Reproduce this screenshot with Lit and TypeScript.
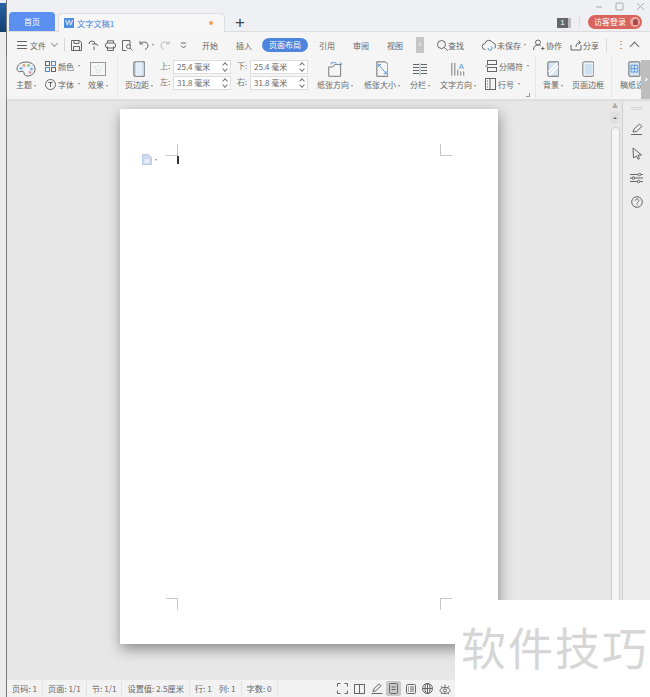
import { LitElement, html, css, svg } from "lit";
import { customElement } from "lit/decorators.js";

const ic = (w: number, h: number, body: unknown, s = 1) =>
  html`<svg class="ic" width=${w * s} height=${h * s} viewBox="0 0 ${w} ${h}" fill="none" stroke="currentColor" stroke-width="1">${body}</svg>`;

const icons: Record<string, () => unknown> = {
  palette: () => ic(20, 16, svg`<path d="M10 1C4.500 1 1 4 1 8c0 2.500 2 3 4 2.500 2-.5 3 0 3 1.500s1 3 3 3c4.500 0 8-2.500 8-7S15 1 10 1z" fill="#eef2f7"/><circle cx="5" cy="7.500" r="1.400" fill="#7ab2e0" stroke="none"/><circle cx="8" cy="4.500" r="1.400" fill="#e8a06a" stroke="none"/><circle cx="12.500" cy="4.500" r="1.400" fill="#90c48a" stroke="none"/><circle cx="15.500" cy="8" r="1.400" fill="#7ab2e0" stroke="none"/><circle cx="14" cy="11.500" r="1.400" fill="#e0a0b0" stroke="none"/>`),
  colors: () => ic(11, 11, svg`<rect x=".5" y=".5" width="4" height="4"/><rect x="6.500" y=".5" width="4" height="4" stroke="#4a90d9"/><rect x=".5" y="6.500" width="4" height="4" stroke="#4a90d9"/><rect x="6.500" y="6.500" width="4" height="4"/>`),
  font: () => ic(11, 11, svg`<circle cx="5.500" cy="5.500" r="5"/><path d="M3.300 3.500h4.400M5.500 3.500v4.500" />`),
  effect: () => ic(16, 14, svg`<rect x=".5" y=".5" width="15" height="13" stroke="#999"/><path d="M5 5h.8M8 4h.8M10.500 6h.8M6 8h.8M9 8.500h.8M7.500 10.500h.8" stroke="#9bb"/>`),
  margin: () => ic(15, 19, svg`<rect x="1" y="1" width="13" height="17" rx="1" fill="#c8d8ea" stroke="#555"/><rect x="3.500" y="1.500" width="7.500" height="16" fill="#e4edf6" stroke="none"/>`, 0.85),
  orient: () => ic(20, 19, svg`<path d="M2 7h5l2-3h7v14H2z"/><path d="M5 4V2h6M15 1.500l2.500 2-2.500 2" stroke="#4a90d9"/>`, 0.85),
  size: () => ic(15, 19, svg`<path d="M1 1h10l3 3v14H1z" stroke="#555"/><path d="M3 4l9 11M3 4v3M3 4h3M12 15v-3M12 15H9" stroke="#4a90d9"/>`, 0.85),
  cols: () => ic(16, 13, svg`<path d="M1 1.500h6M1 4.500h6M1 7.500h6M1 10.500h6M9 1.500h6M9 4.500h6M9 7.500h6M9 10.500h6" stroke="#666"/><path d="M8 0v13" stroke="#9bb"/>`),
  dir: () => ic(17, 17, svg`<path d="M1 1v15M4.500 1v15M8 9v7M11.500 11v5M15 11v5" stroke="#666"/><text x="9" y="8" font-size="9" fill="#4a90d9" stroke="none" font-family="Liberation Sans">A</text>`, 0.85),
  brk: () => ic(12, 12, svg`<rect x="2.500" y=".5" width="9" height="4"/><rect x="2.500" y="7.500" width="9" height="4"/><path d="M0 6h3" stroke="#4a90d9"/>`),
  line: () => ic(11, 12, svg`<rect x=".5" y=".5" width="10" height="11"/><path d="M5 .5v11M2 3h1M2 6h1M2 9h1"/>`),
  bg: () => ic(15, 19, svg`<rect x="1" y="1" width="13" height="17" rx="1" fill="#d6e4f2" stroke="#555"/><path d="M2 13L12 2M3 17L13 6" stroke="#fff" stroke-width="2"/>`, 0.85),
  border: () => ic(15, 19, svg`<rect x="1" y="1" width="13" height="17" rx="2" stroke="#555" fill="#fff"/><rect x="3" y="3" width="9.500" height="13" fill="#cfe0f0" stroke="none"/>`, 0.85),
  grid: () => ic(15, 19, svg`<rect x="1" y="1" width="13" height="17" rx="1" fill="#d6e4f2" stroke="#555"/><path d="M3.500 5h8v8h-8zM7.500 5v8M3.500 9h8" stroke="#4a90d9"/>`, 0.85),
  save: () => ic(11, 11, svg`<path d="M.5.500h8l2 2v8h-10zM3 .5v3h5v-3M2.500 10V6.500h6V10"/>`),
  undoP: () => ic(11, 11, svg`<path d="M1 4a3 3 0 0 1 6 0H4M6 10V6.500M7 4a2.500 2.500 0 0 1 3 2"/>`),
  print: () => ic(11, 11, svg`<rect x=".5" y="3" width="10" height="5" rx="2"/><path d="M2.500 3V.8h6V3M2.500 6.500v4h6v-4"/>`),
  preview: () => ic(11, 11, svg`<path d="M8 6V.5H.5v10h4"/><circle cx="6.500" cy="6.500" r="2"/><path d="M8 8l2.500 2.500"/>`),
  undo: () => ic(10, 10, svg`<path d="M1 1v3h3M1 4c2-3 8-2.500 8 1.500 0 2-1.500 3.500-3 4"/>`),
  redo: () => ic(10, 10, svg`<path d="M9 1v3H6M9 4C7 1 1 1.500 1 5.500c0 2 1.500 3.500 3 4" stroke="#bbb"/>`),
  custom: () => ic(7, 7, svg`<path d="M1 1h5M1 3.500l2.500 2.500L6 3.500"/>`),
  search: () => ic(11, 11, svg`<circle cx="4.500" cy="4.500" r="4"/><path d="M7.500 7.500l3.300 3.300"/>`),
  cloud: () => ic(14, 12, svg`<path d="M3.500 10.500a3 3 0 0 1-.5-6 4 4 0 0 1 7.500-1 3.500 3.500 0 0 1 2 6"/><path d="M6 9a2 2 0 1 0 3-1.500" stroke="#4a90d9"/>`),
  collab: () => ic(12, 12, svg`<circle cx="5" cy="3.500" r="2.500"/><path d="M.5 11c0-3.500 2-5 4.500-5 1 0 2 .3 2.500.8M8 9.500h3.500M9.800 7.800v3.400"/>`),
  share: () => ic(12, 12, svg`<path d="M1 6v5h10V6M6 8c0-3 1.500-4.500 4-4.500M8.500 1.500l2 2-2 2"/>`),
  pen: () => ic(13, 12, svg`<path d="M1 11.500h11M3 9l1-3 5.500-5 2.500 2.500L6.500 8.500z"/>`),
  arrow: () => ic(12, 13, svg`<path d="M2 1l8.500 7H7l1.500 3.500-1.500.8L5.500 9 2.500 11z"/>`),
  sliders: () => ic(13, 12, svg`<path d="M0 2.500h8M11 2.500h2M0 6h2M5 6h8M0 9.500h7M10 9.500h3"/><circle cx="9.500" cy="2.500" r="1.300"/><circle cx="3.500" cy="6" r="1.300"/><circle cx="8.500" cy="9.500" r="1.300"/>`),
  help: () => ic(12, 12, svg`<circle cx="6" cy="6" r="5.300"/><path d="M4.300 4.700c0-2.300 3.500-2.300 3.500-.1 0 1.400-1.800 1.400-1.800 3M6 8.500v1"/>`),
  full: () => ic(11, 11, svg`<path d="M.5 3.500v-3h3M7.500.5h3v3M10.500 7.500v3h-3M3.500 10.500h-3v-3"/>`),
  book: () => ic(11, 10, svg`<rect x=".5" y=".5" width="10" height="9"/><path d="M5.500.5v9"/>`),
  edit: () => ic(12, 11, svg`<path d="M.5 10.500h11M2 8.500l.8-2.500L8 .8l2 2L4.500 8z"/>`),
  pageV: () => ic(9, 11, svg`<rect x=".5" y=".5" width="8" height="10" rx="1"/><path d="M2.500 4h4M2.500 6.500h4"/>`),
  outline: () => ic(10, 10, svg`<rect x=".5" y=".5" width="9" height="9" rx="1"/><path d="M2 3h1M4 3h4M2 5h1M4 5h4M2 7h1M4 7h4"/>`),
  web: () => ic(11, 11, svg`<circle cx="5.500" cy="5.500" r="5"/><path d="M.5 5.500h10M5.500.5v10"/><ellipse cx="5.500" cy="5.500" rx="2.500" ry="5"/>`),
  eye: () => ic(12, 12, svg`<ellipse cx="6" cy="7.500" rx="5" ry="3"/><circle cx="6" cy="7.500" r="1.500"/><path d="M2 3l1.500 2M6 1.500v3M10 3L8.500 5M2 11l1-1M10 11l-1-1"/>`),
  doc: () => ic(10, 11, svg`<path d="M.5.500h6l3 3v7h-9z" fill="#cfdcf0" stroke="#b8c9e6"/><path d="M2.500 6h5M2.500 8h5" stroke="#fff"/>`),
};

type Col = { w: number; icon: string; label: string; caret?: boolean; cls?: string };

@customElement("app-root")
export class AppRoot extends LitElement {
  static styles = css`
    :host { display: block; width: 650px; height: 697px; position: relative; overflow: hidden;
      font-family: "Noto Sans CJK SC", "Liberation Sans", sans-serif; font-size: 8px; color: #666; background: #e7e7e7; }
    * { box-sizing: border-box; }
    .ic { display: block; flex: none; color: #666; }
    .shell { display: flex; height: 697px; }
    .edge { width: 7px; flex: none; display: flex; flex-direction: column; background: #ececec; border-right: 1px solid #777; }
    .edge-top { height: 3px; background: #e9ecf1; }
    .edge-blue { height: 29px; background: linear-gradient(#2563a8, #143f70); }
    .app { flex: 1; display: flex; flex-direction: column; min-width: 0; }
    .cr { display: inline-block; flex: none; width: 0; height: 0; margin-left: 2px; vertical-align: middle; border-left: 1.500px solid transparent; border-right: 1.500px solid transparent; border-top: 2px solid #888; }

    .title { height: 32px; flex: none; background: #eef0f4; display: flex; align-items: flex-end; padding-left: 2px; position: relative; border-bottom: 1px solid #dcdcdc; }
    .tab-home { width: 46px; height: 19px; background: #5b8ff0; color: #fff; border-radius: 4px 4px 0 0; display: flex; align-items: center; justify-content: center; }
    .tab-doc { width: 167px; height: 19px; margin-left: 3px; margin-bottom: -1px; background: #f6f6f6; border: 1px solid #dcdcdc; border-bottom: none; border-radius: 4px 4px 0 0; display: flex; align-items: center; padding: 0 5px; color: #4a84d8; gap: 3px; font-size: 8.200px; }
    .w { width: 10px; height: 10px; background: #4d8fdd; color: #fff; font: 8px/10px "Liberation Sans", sans-serif; text-align: center; }
    .dot { width: 4px; height: 4px; border-radius: 50%; background: #f0a050; margin-left: auto; margin-right: 6px; }
    .plus { font: 17px/17px "Liberation Sans", sans-serif; color: #444; width: 30px; text-align: center; align-self: center; margin-top: 13px; }
    .winctl { position: absolute; right: 5px; top: 0; display: flex; gap: 12px; align-items: center; height: 12px; }
    .winctl .ic { color: #aaa; }
    .right-t { margin-left: auto; margin-right: 8px; display: flex; align-items: center; gap: 8px; align-self: center; margin-top: 12px; }
    .num { width: 14px; height: 10px; background: #666; border-right: 3px solid #bbb; color: #fff; font: 8px/10px "Liberation Sans", sans-serif; text-align: center; margin-top: 2px; }
    .vbar { width: 1px; height: 12px; background: #ddd; }
    .login { width: 54px; height: 14px; background: #d9645c; color: #fff; border-radius: 7px; display: flex; align-items: center; padding-left: 6px; position: relative; white-space: nowrap; }
    .avatar { position: absolute; right: 2px; top: 2px; width: 10px; height: 10px; border-radius: 50%; background: #ecaaa5; display: flex; justify-content: center; }
    .avatar i { display: block; width: 5px; height: 6px; margin-top: 2px; border-radius: 3px 3px 1px 1px; background: #a84a45; }

    .tools { height: 23px; flex: none; background: #f5f5f5; display: flex; align-items: center; padding: 3px 0 0 10px; position: relative; white-space: nowrap; }
    .ham { width: 10px; height: 8px; border-top: 1px solid #666; border-bottom: 1px solid #666; position: relative; margin-right: 3px; }
    .ham::after { content: ""; position: absolute; left: 0; right: 0; top: 2.500px; height: 1px; background: #666; }
    .sep { width: 1px; height: 14px; background: #d8d8d8; flex: none; }
    .sep-end { margin-left: 7px; }
    .chev { width: 5px; height: 5px; border-right: 1px solid #999; border-bottom: 1px solid #999; transform: rotate(45deg); margin: -3px 7px 0 6px; flex: none; }
    .qa { display: flex; align-items: center; gap: 6px; margin-left: 6px; }
    .push { display: flex; margin-left: 4px; }
    .menu { display: flex; margin-left: 6px; align-items: center; }
    .menu span { width: 34px; text-align: center; }
    .menu .on { width: 46px; height: 14px; line-height: 14px; background: #4d85dc; color: #fff; border-radius: 7px; margin: 0 2px 0 1px; }
    .more { width: 8px; height: 16px; background: #c6c6c6; color: #fff; font: 8px/16px "Liberation Sans", sans-serif; text-align: center; margin-left: 4px; }
    .find { display: flex; align-items: center; margin-left: 13px; }
    .act { display: flex; align-items: center; gap: 1px; }
    .a-save { margin-left: 18px; }
    .a-col { margin-left: 7px; }
    .a-share { margin-left: 8px; }
    .dots { color: #666; font: 10px/10px "Liberation Sans", sans-serif; width: 3px; margin-left: 9px; }
    .up { width: 7px; height: 7px; border-left: 1px solid #666; border-top: 1px solid #666; transform: rotate(45deg); margin: 3px 0 0 12px; }

    .ribbon { height: 45px; flex: none; background: #f5f5f5; display: flex; position: relative; border-bottom: 1px solid #e0e0e0; box-shadow: 0 1px 1px #ddd; white-space: nowrap; z-index: 1; overflow: hidden; }
    .col { flex: none; display: flex; flex-direction: column; align-items: center; padding-top: 4px; }
    .col .box { height: 20px; display: flex; align-items: center; }
    .col .lb { margin-top: -1px; height: 14px; line-height: 14px; }
    .col.clip { align-items: flex-end; padding-left: 4px; overflow: hidden; }
    .col.clip .lb { width: 21px; overflow: hidden; }
    .rows { flex: none; display: flex; flex-direction: column; padding-top: 4px; gap: 4px; }
    .r-theme { width: 39px; }
    .r-break { width: 47px; padding-left: 1px; }
    .rw { display: flex; align-items: center; gap: 2px; height: 14px; }
    .rsep { flex: none; width: 1px; height: 42px; margin: 1px 3px 0 5px; background: #e6e6e6; }
    .rsep.s2 { margin: 1px 4px 0 4px; }
    .rsep.s3 { margin: 1px 4px 0 1px; }
    .sp3 { flex: none; width: 3px; }
    .spin { flex: none; display: grid; grid-template-columns: 13px 58px; grid-auto-rows: 14px; row-gap: 2px; padding-top: 5px; width: 77px; }
    .spin label { color: #777; }
    .inp { background: #fff; border: 1px solid #ddd; padding-left: 3px; line-height: 12px; color: #666; position: relative; }
    .inp::after, .inp::before { content: ""; position: absolute; right: 3px; width: 3px; height: 3px; transform: rotate(45deg); border: 0 solid #777; }
    .inp::after { top: 2px; border-left-width: 1px; border-top-width: 1px; }
    .inp::before { bottom: 2px; border-right-width: 1px; border-bottom-width: 1px; }
    .rscroll { position: absolute; right: 0; top: 5px; bottom: 0; width: 9px; background: #bdbdbd; display: flex; align-items: center; justify-content: center; }
    .rscroll i { width: 3px; height: 3px; border-right: 1px solid #fff; border-top: 1px solid #fff; transform: rotate(45deg); }
    .launcher { position: absolute; left: 519px; top: 38px; width: 4px; height: 4px; border-right: 1px solid #999; border-bottom: 1px solid #999; }

    .main { flex: 1; display: flex; min-height: 0; background: #e7e7e7; }
    .canvas { flex: 1; padding: 9px 0 0 113px; }
    .page { width: 378px; height: 535px; background: #fff; position: relative; box-shadow: 1px 5px 13px rgba(0,0,0,.4); }
    .crop { position: absolute; width: 12px; height: 12px; border: 0 solid #c8c8c8; }
    .c1 { left: 46px; top: 35px; border-right-width: 1px; border-bottom-width: 1px; }
    .c2 { left: 320px; top: 35px; border-left-width: 1px; border-bottom-width: 1px; }
    .c3 { left: 46px; top: 489px; border-right-width: 1px; border-top-width: 1px; }
    .c4 { left: 320px; top: 489px; border-left-width: 1px; border-top-width: 1px; }
    .caret { position: absolute; left: 57px; top: 47px; width: 2px; height: 8px; background: #333; }
    .docmark { position: absolute; left: 22px; top: 45px; display: flex; align-items: center; gap: 1px; }
    .track { width: 14px; flex: none; display: flex; flex-direction: column; align-items: center; padding-top: 3px; }
    .tk-a { font: 7px/8px "Liberation Sans", sans-serif; color: #777; height: 9px; }
    .tk-b { width: 10px; height: 11px; background: #e0e0e0; display: flex; align-items: center; justify-content: center; }
    .tk-b i { width: 0; height: 0; border-left: 2px solid transparent; border-right: 2px solid transparent; border-bottom: 2px solid #666; }
    .thumb { width: 9px; flex: 1; margin: 4px 0 0; border: 1px solid #cfcfcf; border-radius: 4px 4px 0 0; background: #f6f6f6; }
    .side { width: 28px; flex: none; border-left: 1px solid #cfcfcf; background: #ededed; display: flex; flex-direction: column; align-items: center; padding-top: 7px; }
    .grip { width: 12px; height: 3px; border-top: 1px solid #d4d4d4; border-bottom: 1px solid #d4d4d4; margin-bottom: 13px; }
    .side .ic { margin-bottom: 12px; }

    .status { height: 17px; flex: none; background: #f2f2f2; display: flex; align-items: center; color: #666; white-space: nowrap; font-size: 8.200px; }
    .status > span { padding: 0 5px; border-right: 1px solid #e2e2e2; line-height: 15px; }
    .status > span.gapb { border-right: none; padding-right: 2px; }
    .views { margin-left: auto; display: flex; align-items: center; gap: 6px; margin-right: 199px; }
    .views .act-v { width: 15px; height: 15px; background: #c9c9c9; border-radius: 2px; display: flex; align-items: center; justify-content: center; margin: 0 -1px 0 -3px; }

    .mark { position: absolute; left: 455px; top: 600px; width: 195px; height: 97px; background: #fff; color: #d6d6d6; font: 45px/94px "Noto Sans CJK SC", sans-serif; padding-left: 6px; letter-spacing: 2px; white-space: nowrap; }
  `;

  private col(c: Col) {
    return html`<div class="col ${c.cls ?? ""}" style="width:${c.w}px">
      <div class="box">${icons[c.icon]()}</div>
      <div class="lb">${c.label}${c.caret ? html`<span class="cr"></span>` : ""}</div>
    </div>`;
  }

  private rowItem(icon: string, label: string) {
    return html`<div class="rw">${icons[icon]()}<span>${label}</span><span class="cr"></span></div>`;
  }

  private spin(rows: [string, string][]) {
    return html`<div class="spin">${rows.map(([l, v]) => html`<label>${l}</label><div class="inp">${v}</div>`)}</div>`;
  }

  render() {
    return html`
      <div class="shell">
        <div class="edge"><div class="edge-top"></div><div class="edge-blue"></div></div>
        <div class="app">
          <div class="title">
            <div class="tab-home">首页</div>
            <div class="tab-doc"><span class="w">W</span><span>文字文稿1</span><span class="dot"></span></div>
            <div class="plus">+</div>
            <div class="right-t"><span class="num">1</span><span class="vbar"></span><div class="login">访客登录<span class="avatar"><i></i></span></div></div>
            <div class="winctl">
              ${ic(8, 8, svg`<path d="M1 5h6"/>`)}
              ${ic(9, 9, svg`<rect x="1" y="1" width="7" height="7" rx="1"/>`)}
              ${ic(9, 9, svg`<path d="M1 1l7 7M8 1l-7 7"/>`)}
            </div>
          </div>

          <div class="tools">
            <div class="ham"></div><span>文件</span><i class="chev"></i><i class="sep"></i>
            <div class="qa">
              ${icons.save()}${icons.undoP()}${icons.print()}${icons.preview()}
              <div class="act">${icons.undo()}<span class="cr"></span></div>
              ${icons.redo()}<div class="push">${icons.custom()}</div>
            </div>
            <div class="menu">
              <span>开始</span><span>插入</span><span class="on">页面布局</span><span>引用</span><span>审阅</span><span>视图</span>
            </div>
            <div class="more">›</div>
            <div class="find">${icons.search()}<span>查找</span></div>
            <div class="act a-save">${icons.cloud()}<span>未保存</span><span class="cr"></span></div>
            <div class="act a-col">${icons.collab()}<span>协作</span></div>
            <div class="act a-share">${icons.share()}<span>分享</span></div>
            <i class="sep sep-end"></i>
            <span class="dots">⋮</span>
            <i class="up"></i>
          </div>

          <div class="ribbon">
            ${this.col({ w: 38, icon: "palette", label: "主题", caret: true })}
            <div class="rows r-theme">${this.rowItem("colors", "颜色")}${this.rowItem("font", "字体")}</div>
            ${this.col({ w: 28, icon: "effect", label: "效果", caret: true })}
            <i class="rsep"></i>
            ${this.col({ w: 36, icon: "margin", label: "页边距", caret: true })}
            <div class="sp3"></div>
            ${this.spin([["上:", "25.4 毫米"], ["左:", "31.8 毫米"]])}
            ${this.spin([["下:", "25.4 毫米"], ["右:", "31.8 毫米"]])}
            ${this.col({ w: 42, icon: "orient", label: "纸张方向", caret: true })}
            ${this.col({ w: 52, icon: "size", label: "纸张大小", caret: true })}
            ${this.col({ w: 24, icon: "cols", label: "分栏", caret: true })}
            ${this.col({ w: 52, icon: "dir", label: "文字方向", caret: true })}
            <div class="rows r-break">${this.rowItem("brk", "分隔符")}${this.rowItem("line", "行号")}</div>
            <i class="rsep s2"></i>
            ${this.col({ w: 26, icon: "bg", label: "背景", caret: true })}
            ${this.col({ w: 44, icon: "border", label: "页面边框" })}
            <i class="rsep s3"></i>
            ${this.col({ w: 25, icon: "grid", label: "稿纸设", cls: "clip" })}
            <div class="launcher"></div>
            <div class="rscroll"><i></i></div>
          </div>

          <div class="main">
            <div class="canvas">
              <div class="page">
                <div class="crop c1"></div>
                <div class="crop c2"></div>
                <div class="crop c3"></div>
                <div class="crop c4"></div>
                <div class="caret"></div>
                <div class="docmark">${icons.doc()}<span class="cr"></span></div>
              </div>
            </div>
            <div class="track">
              <div class="tk-a">≚</div>
              <div class="tk-b"><i></i></div>
              <div class="thumb"></div>
            </div>
            <div class="side">
              <div class="grip"></div>
              ${icons.pen()}${icons.arrow()}${icons.sliders()}${icons.help()}
            </div>
          </div>

          <div class="status">
            <span>页码: 1</span><span>页面: 1/1</span><span>节: 1/1</span><span>设置值: 2.5厘米</span>
            <span class="gapb">行: 1</span><span>列: 1</span><span>字数: 0</span>
            <div class="views">
              ${icons.full()}${icons.book()}${icons.edit()}
              <div class="act-v">${icons.pageV()}</div>
              ${icons.outline()}${icons.web()}${icons.eye()}
            </div>
          </div>
        </div>
      </div>
      <div class="mark">软件技巧</div>
    `;
  }
}
